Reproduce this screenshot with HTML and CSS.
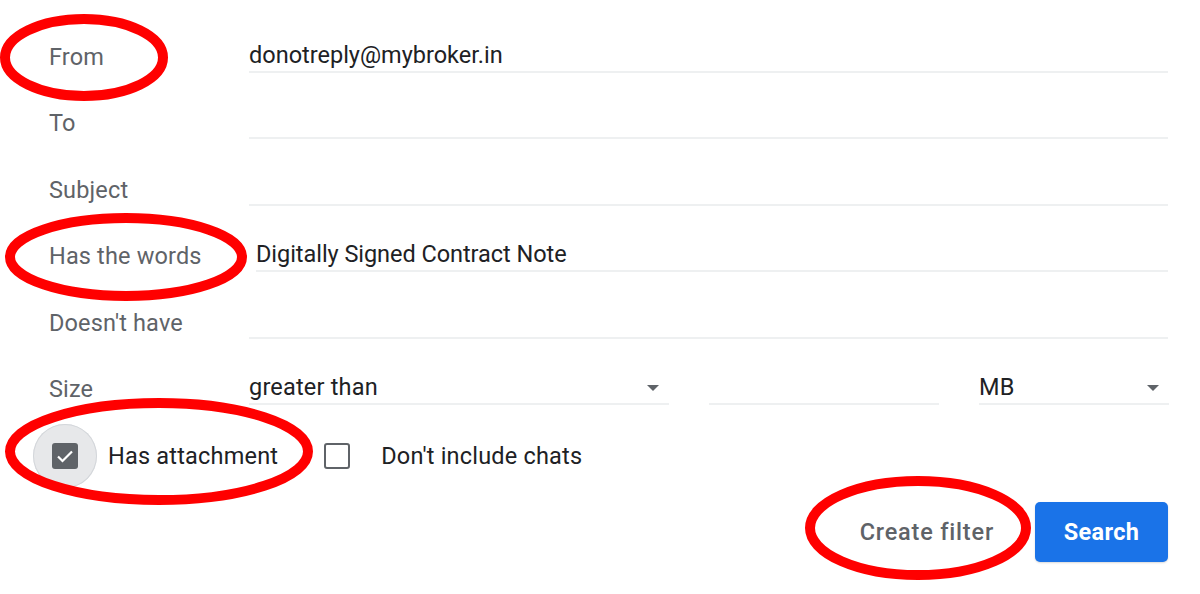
FILE: index.html
```html
<!DOCTYPE html>
<html>
<head>
<meta charset="utf-8">
<link rel="stylesheet" href="styles.css">
</head>
<body>
<div class="page">
  <div class="form">
    <div class="row">
      <div class="label">From</div>
      <div class="field">donotreply@mybroker.in</div>
    </div>
    <div class="row">
      <div class="label">To</div>
      <div class="field"></div>
    </div>
    <div class="row">
      <div class="label">Subject</div>
      <div class="field"></div>
    </div>
    <div class="row">
      <div class="label">Has the words</div>
      <div class="field shifted">Digitally Signed Contract Note</div>
    </div>
    <div class="row">
      <div class="label">Doesn't have</div>
      <div class="field"></div>
    </div>
    <div class="row">
      <div class="label">Size</div>
      <div class="size">
        <div class="field select wide">greater than<span class="arrow"></span></div>
        <div class="field num"></div>
        <div class="field select unit">MB<span class="arrow"></span></div>
      </div>
    </div>
    <div class="row checks">
      <div class="check-item">
        <span class="ripple"><span class="box checked"><svg class="tick" viewBox="0 0 26 26" width="26" height="26"><path d="M6 13.5l4.5 4.5 9.5-9.5" fill="none" stroke="#fff" stroke-width="2.2"/></svg></span></span>
        <span class="check-label">Has attachment</span>
      </div>
      <div class="check-item second">
        <span class="box"></span>
        <span class="check-label">Don't include chats</span>
      </div>
    </div>
    <div class="actions">
      <span class="btn-text">Create filter</span>
      <span class="btn-primary">Search</span>
    </div>
  </div>
  <svg class="marks" width="1200" height="594" viewBox="0 0 1200 594">
    <ellipse cx="84" cy="57.5" rx="79" ry="38.5"/>
    <ellipse cx="126" cy="257" rx="116" ry="39"/>
    <ellipse cx="159" cy="451.5" rx="149" ry="48.5"/>
    <ellipse cx="918" cy="528" rx="108" ry="47"/>
  </svg>
</div>
</body>
</html>
```
FILE: styles.css
```css
html, body {
  margin: 0;
  padding: 0;
  background: #fff;
}
.page {
  position: relative;
  width: 1200px;
  height: 594px;
  overflow: hidden;
  font-family: Roboto, "Liberation Sans", sans-serif;
}
.form {
  padding: 6px 32px 0 49px;
  display: flex;
  flex-direction: column;
}
.row {
  height: 66.5px;
  display: grid;
  grid-template-columns: 200px 1fr;
  align-items: end;
}
.label {
  font-size: 23.5px;
  letter-spacing: 0.15px;
  line-height: 26px;
  color: #5f6368;
  padding-bottom: 3px;
}
.field {
  font-size: 23.5px;
  line-height: 26px;
  color: #202124;
  padding-bottom: 3px;
  height: 26px;
  border-bottom: 2px solid #eef0f1;
  position: relative;
}
.field.shifted {
  margin-left: 7px;
  letter-spacing: -0.05px;
}
.select {
  letter-spacing: 0.2px;
}
.size {
  display: grid;
  grid-template-columns: 420px 230px 190px;
  column-gap: 40px;
  justify-content: space-between;
}
.arrow {
  position: absolute;
  right: 10px;
  top: 11px;
  width: 0;
  height: 0;
  border-left: 6px solid transparent;
  border-right: 6px solid transparent;
  border-top: 6px solid #5f6368;
}
.checks {
  display: flex;
  align-items: center;
  justify-content: flex-start;
  height: 66.5px;
  padding-top: 36px;
  box-sizing: border-box;
  margin-left: -16px;
}
.check-item {
  display: flex;
  align-items: center;
}
.ripple {
  width: 64px;
  height: 64px;
  border-radius: 50%;
  background: #e7e8ea;
  box-shadow: inset 0 0 0 1px #d3d6da;
  display: flex;
  align-items: center;
  justify-content: center;
}
.box {
  width: 26px;
  height: 26px;
  box-sizing: border-box;
  border: 2.5px solid #5f6368;
  border-radius: 3px;
  display: flex;
  align-items: center;
  justify-content: center;
}
.box.checked {
  background: #5f6368;
  border: none;
}
.tick {
  display: block;
}
.check-label {
  font-size: 23.5px;
  letter-spacing: 0.2px;
  color: #202124;
  margin-left: 11px;
}
.check-item.second {
  margin-left: 46px;
}
.check-item.second .check-label {
  margin-left: 31px;
}
.actions {
  display: flex;
  justify-content: flex-end;
  align-items: center;
  margin-top: 30px;
}
.btn-text {
  font-size: 23.5px;
  font-weight: 500;
  letter-spacing: 0.8px;
  color: #5f6368;
  margin-right: 41px;
}
.btn-primary {
  width: 133px;
  height: 60px;
  border-radius: 5px;
  background: #1a73e8;
  color: #fff;
  font-size: 23.5px;
  letter-spacing: 0.3px;
  font-weight: 700;
  display: flex;
  align-items: center;
  justify-content: center;
  box-shadow: 0 1px 2px rgba(0,0,0,0.15);
}
.marks {
  position: absolute;
  left: 0;
  top: 0;
  pointer-events: none;
}
.marks ellipse {
  fill: none;
  stroke: #ff0000;
  stroke-width: 10;
}
```
